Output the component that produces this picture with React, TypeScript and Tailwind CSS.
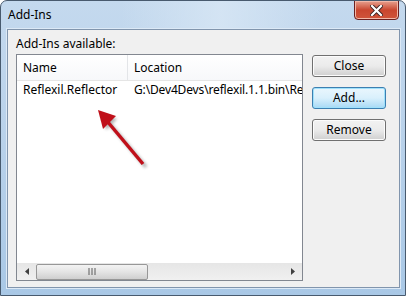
import React from "react";

const font = { fontFamily: '"Noto Sans", "Open Sans", sans-serif' };

const Btn = ({ label, focused }: { label: string; focused?: boolean }) => (
  <div
    className={`flex h-[22px] w-[74px] items-center justify-center rounded-[3px] border text-[12px] text-black ${
      focused
        ? "border-[#3c7fb1] bg-gradient-to-b from-[#eaf6fd] via-[#d9f0fc] to-[#a7d9f5] shadow-[inset_0_0_0_1px_#9fe1fb]"
        : "border-[#707070] bg-gradient-to-b from-[#f2f2f2] via-[#ebebeb] to-[#cfcfcf] shadow-[inset_0_0_0_1px_#fcfcfc]"
    }`}
  >
    {label}
  </div>
);

const Arrow = () => (
  <svg className="absolute left-0 top-0" width="180" height="180" viewBox="0 0 180 180">
    <defs>
      <filter id="sh" x="-50%" y="-50%" width="200%" height="200%">
        <feGaussianBlur stdDeviation="1.6" />
      </filter>
    </defs>
    <g transform="translate(3,3)" opacity="0.45" filter="url(#sh)">
      <line x1="142" y1="163" x2="106" y2="120" stroke="#555" strokeWidth="3.5" />
      <polygon points="98,110 113,115 102,126" fill="#555" />
    </g>
    <line x1="142" y1="163" x2="106" y2="120" stroke="#c0101a" strokeWidth="3.5" />
    <polygon points="97,109 115,115 102,128" fill="#c0101a" />
  </svg>
);

export default function App() {
  return (
    <div
      className="relative h-[296px] w-[406px] overflow-hidden rounded-t-[7px] border border-[#485a6e] bg-gradient-to-b from-[#c4d9ee] via-[#b8d1ea] to-[#a9c8e6]"
      style={font}
    >
      {/* glass streaks */}
      <div className="absolute left-[120px] top-0 h-[28px] w-[200px] bg-gradient-to-r from-transparent via-[#d8e7f5] to-transparent opacity-80" />

      {/* title bar */}
      <div className="relative flex h-[28px] items-center pl-[7px] text-[12px] text-black">
        Add-Ins
      </div>

      {/* close button */}
      <div className="absolute right-[6px] top-[-1px] flex h-[20px] w-[45px] items-center justify-center rounded-b-[4px] border border-[#6b2020] bg-gradient-to-b from-[#e6a08f] via-[#c9462f] to-[#d0543b] shadow-[inset_0_0_0_1px_#f2b8a8]">
        <svg width="13" height="11" viewBox="0 0 13 11">
          <path d="M2 1 L11 10 M11 1 L2 10" stroke="#3a2020" strokeWidth="4" strokeLinecap="square" />
          <path d="M2 1 L11 10 M11 1 L2 10" stroke="#ffffff" strokeWidth="2.2" strokeLinecap="square" />
        </svg>
      </div>

      {/* client area */}
      <div className="relative ml-[6px] mr-[5px] h-[259px] border border-[#8195ad] bg-[#f0f0f0] shadow-[0_0_0_1px_#dce9f6]">
        <div className="flex pl-[8px] pt-[5px]">
          <div className="flex flex-col">
            <div className="h-[19px] text-[12px] leading-[18px] text-black">Add-Ins available:</div>
            <div className="relative flex h-[227px] w-[287px] flex-col border border-[#828790] bg-white">
              {/* header */}
              <div className="flex h-[26px] border-b border-[#e5e5e5] bg-gradient-to-b from-white to-[#f7f8fa] text-[12px] text-black">
                <div className="flex w-[111px] items-center border-r border-[#e3e5e8] pl-[6px]">Name</div>
                <div className="flex flex-1 items-center whitespace-nowrap pl-[6px]">Location</div>
              </div>
              {/* row */}
              <div className="flex h-[17px] items-center whitespace-nowrap text-[12px] text-black">
                <div className="w-[111px] pl-[6px]">Reflexil.Reflector</div>
                <div className="min-w-0 flex-1 overflow-hidden pl-[6px] tracking-[-0.15px]">G:\Dev4Devs\reflexil.1.1.bin\Refle</div>
              </div>
              <div className="flex-1" />
              {/* horizontal scrollbar */}
              <div className="flex h-[17px] items-center bg-gradient-to-b from-[#e6e6e6] to-[#f0f0f0]">
                <div className="flex w-[19px] items-center justify-center">
                  <svg width="4" height="7" viewBox="0 0 4 7">
                    <path d="M4 0 L0 3.5 L4 7 Z" fill="#404040" />
                  </svg>
                </div>
                <div className="flex h-[16px] w-[112px] items-center justify-center rounded-[2px] border border-[#979797] bg-gradient-to-b from-[#f3f3f3] via-[#e4e4e4] to-[#cfcfcf]">
                  <svg width="8" height="7" viewBox="0 0 8 7">
                    <path d="M1 0v7M4 0v7M7 0v7" stroke="#5a5a5a" strokeWidth="1" />
                  </svg>
                </div>
                <div className="flex-1" />
                <div className="flex w-[19px] items-center justify-center">
                  <svg width="4" height="7" viewBox="0 0 4 7">
                    <path d="M0 0 L4 3.5 L0 7 Z" fill="#404040" />
                  </svg>
                </div>
              </div>
            </div>
          </div>
          <div className="ml-[9px] mt-[20px] flex flex-col gap-[10px]">
            <Btn label="Close" />
            <Btn label="Add..." focused />
            <Btn label="Remove" />
          </div>
        </div>
      </div>

      <Arrow />
    </div>
  );
}
